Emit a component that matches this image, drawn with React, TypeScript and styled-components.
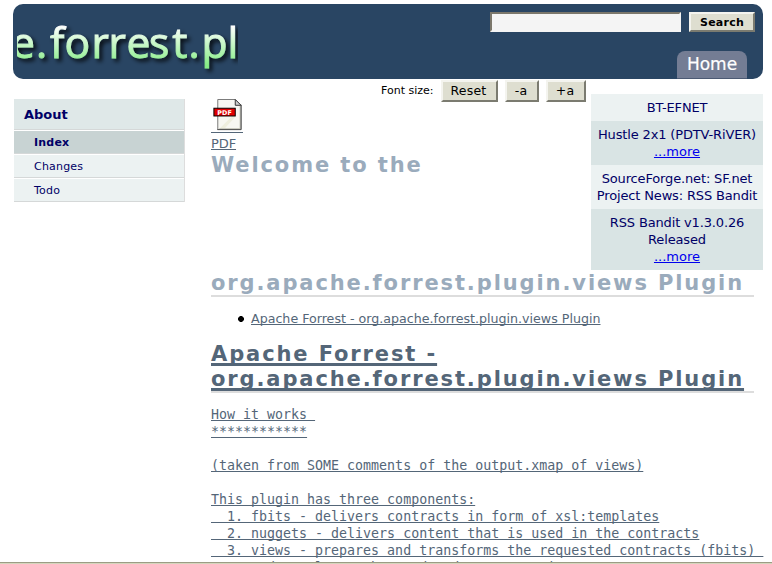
import React from "react";
import styled, { createGlobalStyle } from "styled-components";

const Global = createGlobalStyle`
  * { box-sizing: border-box; }
  body { margin: 0; background: #fff; overflow: hidden; font-family: "DejaVu Sans", Verdana, sans-serif; font-size: 13px; color: #000; }
`;
const Page = styled.div`
  height: 564px; overflow: hidden; display: flex; flex-direction: column; padding-top: 4px; position: relative;
`;
const Header = styled.header`
  flex: none; height: 75px; margin: 0 9px 0 13px; background: #294563; border-radius: 10px;
  display: flex; justify-content: space-between; overflow: hidden;
`;
const Logo = styled.svg`display: block; margin-left: 4px;`;
const Tools = styled.div`
  width: 273px; display: flex; flex-direction: column; justify-content: space-between; align-items: flex-end;
`;
const SearchForm = styled.form`
  display: flex; gap: 8px; padding-top: 8px; width: 273px;
`;
const SearchInput = styled.input`
  width: 191px; height: 20px; background: #f4f4f4; border: 2px solid #f4f4f4; border-top-color: #7b776b; border-left-color: #7b776b; outline: none; padding: 0; margin: 0;
`;
const Button = styled.button<{ $w: number; $h: number; $bold?: boolean }>`
  width: ${p => p.$w}px; height: ${p => p.$h}px; padding: ${p => (p.$bold ? "1px 0 0" : "0 2px 0 0")}; margin: 0; color: #000; background: #deded0;
  border: 2px solid; border-color: #f4f4ef #7b7b70 #7b7b70 #f4f4ef; white-space: nowrap;
  font: ${p => (p.$bold ? "bold 11px" : "12.5px")} / 14px "DejaVu Sans", sans-serif;
  letter-spacing: ${p => (p.$bold ? "0.25px" : "0.2px")};
`;
const HomeTab = styled.div`
  width: 70px; height: 28px; margin-right: 16px; border-radius: 8px 8px 0 0; background: #747d94; border-bottom: 1px solid #4c5a73;
  color: #fff; font-size: 17px; line-height: 27px; text-align: center; -webkit-text-stroke: 0.2px #fff;
`;
const Body = styled.div`
  flex: 1; min-height: 0; display: flex; align-items: flex-start;
`;
const Menu = styled.nav`
  flex: none; width: 171px; margin: 20px 0 0 14px; border-right: 1px solid #ddd; color: #000066;
`;
const MenuTitle = styled.div`
  height: 31px; background: #dfe8e8; font: bold 13px/31px "DejaVu Sans", sans-serif; padding-left: 10px; border-bottom: 1px solid #d5d8d8;
`;
const MenuItem = styled.div<{ $active?: boolean }>`
  height: 23px; margin-top: 1px; padding-left: 20px; background: ${p => (p.$active ? "#c8d3d3" : "#ecf2f2")};
  font-size: 11px; font-weight: ${p => (p.$active ? "bold" : "normal")}; line-height: 23px; letter-spacing: 0.2px; border-bottom: 1px solid #d5d8d8;
`;
const Main = styled.main`
  width: 552px; margin-left: 26px; flex: none;
`;
const Top = styled.div`height: 191px; display: flex; justify-content: space-between;`;
const Intro = styled.div`width: 375px;`;
const FontSize = styled.div`
  height: 24px; margin-left: 170px; display: flex; align-items: flex-start; font-size: 11px; line-height: 24px; white-space: nowrap;
`;
const SizeLabel = styled.span`width: 60px;`;
const SizeButtons = styled.div`display: flex; gap: 7px; padding-top: 1px;`;
const PdfLink = styled.div`
  margin-top: -4px; color: #546678; text-decoration: underline; line-height: 17px; display: flex; flex-direction: column; align-items: flex-start; letter-spacing: -0.1px;
`;
const PdfIcon = styled.svg`display: block; border-bottom: 1px solid #546678; margin-bottom: 2px;`;
const Feeds = styled.aside`
  width: 172px; margin-top: 15px; color: #000066; text-align: center; line-height: 17px; letter-spacing: -0.15px;
`;
const Feed = styled.div<{ $dark?: boolean; $h: number }>`
  height: ${p => p.$h}px; padding-top: 5px; background: ${p => (p.$dark ? "#d9e4e4" : "#ecf2f2")}; white-space: nowrap;
`;
const More = styled.a`color: #0000ee; text-decoration: underline; letter-spacing: 0;`;
const Heading = styled.h1<{ $linked?: boolean }>`
  margin: 0 0 -1px; padding-top: 1px; font: bold 21px/25px "DejaVu Sans", sans-serif; letter-spacing: 1.89px; white-space: nowrap;
  color: ${p => (p.$linked ? "#546678" : "#9aabbc")};
  text-decoration: ${p => (p.$linked ? "underline 3px" : "none")}; text-underline-offset: 2px; text-decoration-skip-ink: none;
`;
const Ruled = styled.div`width: 543px; border-bottom: 2px solid #ddd;`;
const Toc = styled.ul`
  margin: 13px 0 14px; padding-left: 27px; list-style: none; line-height: 17px; font-size: 12.65px; color: #546678;
`;
const TocItem = styled.li`display: flex; align-items: center; gap: 7px;`;
const TocLink = styled.span`text-decoration: underline; text-decoration-skip-ink: none;`;
const Source = styled.pre`
  margin: 13px 0 0; color: #546678; font: 13.3px/17px "DejaVu Sans Mono", monospace; text-decoration: underline; text-decoration-skip-ink: none;
`;
const Bottom = styled.div`
  position: absolute; left: 0; right: 0; bottom: 0; height: 2px; background: #d5d5bd; border-top: 1px solid #9c9c84;
`;

const text = `How it works 
************

(taken from SOME comments of the output.xmap of views)

This plugin has three components:
  1. fbits - delivers contracts in form of xsl:templates
  2. nuggets - delivers content that is used in the contracts
  3. views - prepares and transforms the requested contracts (fbits) 
     and can leave the rendered output as is`;

export default function App() {
  return (
    <Page>
      <Global />
      <Header>
        <Logo width="221" height="75" viewBox="0 0 221 75">
          <defs>
            <linearGradient id="glow" gradientUnits="userSpaceOnUse" x1="0" y1="22" x2="0" y2="61">
              <stop offset="0" stopColor="#fff" /><stop offset="1" stopColor="#87ee86" />
            </linearGradient>
            <filter id="shade" x="-5%" y="-20%" width="115%" height="150%">
              <feDropShadow dx="3" dy="3" stdDeviation="2" floodColor="#000" floodOpacity=".8" />
            </filter>
          </defs>
          <text x="-6 19 33 47.6 74.6 91.6 109.4 132 155.3 171.5 184.6 210.6" y="53.5" fontFamily="Open Sans" fontSize="42.5" fill="url(#glow)" stroke="url(#glow)" strokeWidth=".9" filter="url(#shade)">e.forrest.pl</text>
        </Logo>
        <Tools>
          <SearchForm onSubmit={e => e.preventDefault()}>
            <SearchInput aria-label="Search" />
            <Button $w={66} $h={20} $bold>Search</Button>
          </SearchForm>
          <HomeTab>Home</HomeTab>
        </Tools>
      </Header>
      <Body>
        <Menu>
          <MenuTitle>About</MenuTitle>
          <MenuItem $active>Index</MenuItem>
          <MenuItem>Changes</MenuItem>
          <MenuItem>Todo</MenuItem>
        </Menu>
        <Main>
          <Top>
            <Intro>
              <FontSize>
                <SizeLabel>Font size:</SizeLabel>
                <SizeButtons>
                  <Button $w={57} $h={22}>Reset</Button>
                  <Button $w={34} $h={22}>-a</Button>
                  <Button $w={40} $h={22}>+a</Button>
                </SizeButtons>
              </FontSize>
              <PdfLink>
                <PdfIcon width="32" height="34" viewBox="0 0 32 34">
                  <path d="M6.5 .5H24.5L30.5 6.5V31.5H6.5Z" fill="#f7f7f2" stroke="#777" />
                  <path d="M9 30L25 14V18L14 30Z" fill="#eeeede" />
                  <path d="M29.5 7V30.5H8" fill="none" stroke="#c4c4b8" />
                  <path d="M24.5 .5V6.5H30.5Z" fill="#ccc" stroke="#333" />
                  <path d="M30.5 6V31.5H6" fill="none" stroke="#555" />
                  <rect x="2.5" y="9.5" width="22" height="8" fill="#e00000" stroke="#000" />
                  <text x="6" y="16.2" textLength="15" fontFamily="DejaVu Sans" fontWeight="bold" fontSize="6.6" fill="#fff">PDF</text>
                </PdfIcon>
                <span>PDF</span>
              </PdfLink>
              <Heading>Welcome to the</Heading>
            </Intro>
            <Feeds>
              <Feed $h={27}>BT-EFNET</Feed>
              <Feed $h={44} $dark>Hustle 2x1 (PDTV-RiVER)<br /><More>...more</More></Feed>
              <Feed $h={44}>SourceForge.net: SF.net<br />Project News: RSS Bandit</Feed>
              <Feed $h={61} $dark>RSS Bandit v1.3.0.26<br />Released<br /><More>...more</More></Feed>
            </Feeds>
          </Top>
          <Ruled><Heading>org.apache.forrest.plugin.views Plugin</Heading></Ruled>
          <Toc>
            <TocItem>
              <svg width="6" height="6" viewBox="0 0 6 6"><path d="M2 0H4L6 2V4L4 6H2L0 4V2Z" /></svg>
              <TocLink>Apache Forrest - org.apache.forrest.plugin.views Plugin</TocLink>
            </TocItem>
          </Toc>
          <Ruled><Heading $linked>Apache Forrest -<br />org.apache.forrest.plugin.views Plugin</Heading></Ruled>
          <Source>{text}</Source>
        </Main>
      </Body>
      <Bottom />
    </Page>
  );
}
